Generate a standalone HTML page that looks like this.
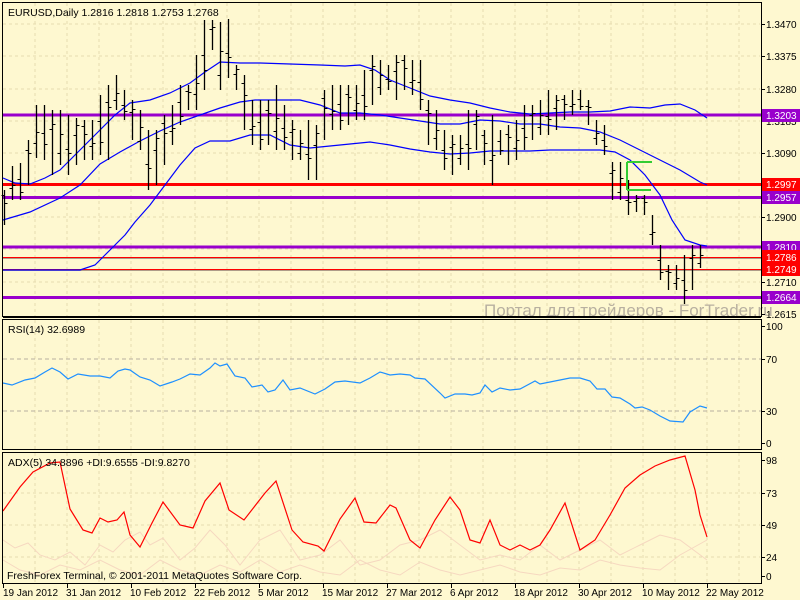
<!DOCTYPE html>
<html><head><meta charset="utf-8"><style>
html,body{margin:0;padding:0;background:#fef8d0;}
body{width:800px;height:600px;overflow:hidden;position:relative;font-family:"Liberation Sans",sans-serif;}
svg{position:absolute;left:0;top:0;}
</style></head><body>
<svg width="800" height="600" viewBox="0 0 800 600" xmlns="http://www.w3.org/2000/svg" font-family="Liberation Sans, sans-serif">
<rect width="800" height="600" fill="#fef8d0"/>
<g id="grid" stroke="#e6dcb0" stroke-dasharray="3,3" stroke-width="1"></g>
<text x="484" y="316" font-size="17" fill="#b8b0a0">Портал для трейдеров - ForTrader.ru</text>
<rect x="3" y="317" width="758" height="3" fill="#fef8d0"/>
<line x1="3" y1="115" x2="761" y2="115" stroke="#9900cc" stroke-width="3"/>
<line x1="3" y1="184.5" x2="761" y2="184.5" stroke="#ff0000" stroke-width="3"/>
<line x1="3" y1="197.5" x2="761" y2="197.5" stroke="#9900cc" stroke-width="3"/>
<line x1="3" y1="247" x2="761" y2="247" stroke="#9900cc" stroke-width="3"/>
<line x1="3" y1="257.5" x2="761" y2="257.5" stroke="#ff0000" stroke-width="1"/>
<line x1="3" y1="269.5" x2="761" y2="269.5" stroke="#ff0000" stroke-width="1"/>
<line x1="3" y1="297.5" x2="761" y2="297.5" stroke="#9900cc" stroke-width="3"/>
<line x1="3" y1="258.5" x2="761" y2="258.5" stroke="#604040" stroke-width="0.6"/>
<line x1="3" y1="270.5" x2="761" y2="270.5" stroke="#604040" stroke-width="0.6"/>
<g fill="none" stroke="#0000ff" stroke-width="1.2">
<polyline points="3,178 15,183 30,184 45,178 60,170 80,150 100,130 115,115 130,103 150,100 170,93 190,83 205,72 220,62 240,63 260,63 290,64 320,65 345,66 360,65 375,70 390,80 410,88 430,96 450,100 470,103 490,108 510,112 530,114 550,113 570,112 590,112 610,111 630,107 650,108 665,105 680,104 695,110 707,118"/>
<polyline points="3,220 30,212 60,198 80,185 100,164 120,152 140,141 160,131 180,122 200,115 220,108 240,102 255,100 280,100 300,100 320,105 340,113 360,113 380,115 400,118 420,121 440,124 460,124 480,120 500,121 520,124 540,124 560,127 580,128 590,130 600,132 620,140 640,150 660,160 680,170 700,182 707,185"/>
<polyline points="3,270 30,270 60,270 80,270 95,265 105,255 115,245 125,235 135,222 150,205 165,185 180,165 195,148 210,141 230,141 250,135 270,135 290,145 310,148 330,146 350,144 370,142 390,145 410,149 430,152 450,154 470,153 490,151 510,151 530,151 550,150 570,150 590,150 600,150 615,152 630,160 645,175 660,195 672,220 685,240 700,245 707,246"/>
</g>
<g id="bars" stroke="#000" stroke-width="1.3"></g>
<g stroke="#33cc33" stroke-width="2"><line x1="627" y1="162" x2="652" y2="162"/><line x1="627" y1="190" x2="651" y2="190"/><line x1="627" y1="162" x2="627" y2="190"/></g>
<line x1="3" y1="359" x2="761" y2="359" stroke="#b8b0a0" stroke-dasharray="4,3"/>
<line x1="3" y1="411" x2="761" y2="411" stroke="#b8b0a0" stroke-dasharray="4,3"/>
<polyline fill="none" stroke="#1e90ff" stroke-width="1.2" points="3,383 12,385 25,380 35,378 45,372 52,368 60,372 68,379 78,374 90,376 100,376 110,378 118,371 125,369 130,370 140,377 150,380 160,386 172,382 180,379 190,374 200,375 210,368 215,363 220,366 227,364 235,376 245,378 252,387 262,385 268,392 275,390 283,380 290,390 300,388 315,394 325,389 335,382 345,381 360,383 370,378 380,372 390,375 400,374 410,375 415,378 425,379 440,393 445,398 455,394 465,394 472,395 480,393 485,385 492,392 500,388 510,390 520,389 535,381 540,384 550,382 560,380 570,378 580,378 590,381 597,389 605,389 612,397 620,398 630,404 635,408 642,407 650,410 660,416 670,421 683,422 690,412 700,406 707,408"/>
<polyline fill="none" stroke="#f6d8c0" stroke-width="1" points="3,540 15,548 28,543 40,555 55,560 70,552 85,565 100,545 113,552 125,540 140,532 150,545 163,538 180,560 195,548 210,530 225,545 240,565 260,540 280,530 300,560 320,555 340,540 360,565 380,560 400,545 420,540 440,530 460,545 480,560 500,555 520,560 540,545 560,560 580,550 600,540 620,555 640,545 660,535 680,540 707,560"/>
<polyline fill="none" stroke="#f6d8c0" stroke-width="1" points="3,560 20,570 40,575 60,565 80,570 100,560 120,570 140,575 160,560 180,570 200,575 220,565 240,572 260,560 280,572 300,565 320,572 340,575 360,560 380,570 400,575 420,562 440,570 460,575 480,570 500,565 520,572 540,575 560,568 580,570 600,560 620,565 640,568 660,570 680,555 707,540"/>
<polyline fill="none" stroke="#ff0000" stroke-width="1.2" points="3,511 20,487 33,472 50,463 60,462 70,509 83,530 92,533 100,518 108,522 117,520 124,512 130,535 140,547 152,523 163,502 180,525 193,528 205,501 220,483 229,510 244,520 265,493 276,481 292,530 303,542 318,546 324,551 340,519 355,498 364,522 376,523 390,505 396,508 410,540 420,548 435,520 450,497 460,510 470,540 480,543 490,520 500,545 510,550 520,545 530,550 540,545 550,530 565,503 580,550 595,540 610,515 625,488 640,475 655,466 670,460 685,456 695,490 700,515 707,537"/>
<g fill="none" stroke="#000" stroke-width="1">
<rect x="2.5" y="2.5" width="759" height="314"/>
<rect x="2.5" y="319.5" width="759" height="130"/>
<rect x="2.5" y="452.5" width="759" height="131"/>
</g>
<line x1="3" y1="317.5" x2="761" y2="317.5" stroke="#000"/>
<g id="ticks" stroke="#000"></g>
<g font-size="10.5" fill="#000">
<text x="8" y="16">EURUSD,Daily  1.2816 1.2818 1.2753 1.2768</text>
<text x="8" y="333">RSI(14) 32.6989</text>
<text x="8" y="466">ADX(5) 34.8896 +DI:9.6555 -DI:9.8270</text>
<text x="7" y="579">FreshForex Terminal, © 2001-2011 MetaQuotes Software Corp.</text>
</g>
<g font-size="10" fill="#000">
<text x="766" y="28">1.3470</text><text x="766" y="60">1.3375</text><text x="766" y="93">1.3280</text><text x="766" y="125">1.3185</text><text x="766" y="157">1.3090</text><text x="766" y="221">1.2900</text><text x="766" y="286">1.2710</text><text x="766" y="318">1.2615</text>
<text x="766" y="330">100</text><text x="766" y="363">70</text><text x="766" y="415">30</text><text x="766" y="447">0</text>
<text x="766" y="464">98</text><text x="766" y="497">73</text><text x="766" y="529">49</text><text x="766" y="561">24</text><text x="766" y="580">0</text>
</g>
<g font-size="10">
<rect x="762" y="109" width="38" height="13" fill="#9900cc"/><text x="766" y="119" fill="#fff">1.3203</text>
<rect x="762" y="178" width="38" height="13" fill="#ff0000"/><text x="766" y="188" fill="#fff">1.2997</text>
<rect x="762" y="191" width="38" height="13" fill="#9900cc"/><text x="766" y="201" fill="#fff">1.2957</text>
<rect x="762" y="241" width="38" height="13" fill="#9900cc"/><text x="766" y="251" fill="#fff">1.2810</text>
<rect x="762" y="250" width="38" height="13" fill="#ff0000"/><text x="766" y="261" fill="#fff">1.2786</text>
<rect x="762" y="263" width="38" height="13" fill="#ff0000"/><text x="766" y="273" fill="#fff">1.2749</text>
<rect x="762" y="291" width="38" height="13" fill="#9900cc"/><text x="766" y="301" fill="#fff">1.2664</text>
</g>
<g font-size="10" fill="#000">
<text x="3" y="596">19 Jan 2012</text><text x="66" y="596">31 Jan 2012</text><text x="130" y="596">10 Feb 2012</text><text x="194" y="596">22 Feb 2012</text><text x="258" y="596">5 Mar 2012</text><text x="322" y="596">15 Mar 2012</text><text x="386" y="596">27 Mar 2012</text><text x="450" y="596">6 Apr 2012</text><text x="514" y="596">18 Apr 2012</text><text x="578" y="596">30 Apr 2012</text><text x="642" y="596">10 May 2012</text><text x="706" y="596">22 May 2012</text>
</g>
</svg>
<script>
var NS="http://www.w3.org/2000/svg";
function L(g,x1,y1,x2,y2,extra){var l=document.createElementNS(NS,"line");l.setAttribute("x1",x1);l.setAttribute("y1",y1);l.setAttribute("x2",x2);l.setAttribute("y2",y2);if(extra)for(var k in extra)l.setAttribute(k,extra[k]);g.appendChild(l);}
var grid=document.getElementById("grid");
for(var x=35;x<760;x+=32){L(grid,x,3,x,316);L(grid,x,320,x,449);L(grid,x,453,x,583);}
[24,56,89,121,153,185,217,249,282].forEach(function(y){L(grid,3,y,760,y);});
[493,525,557].forEach(function(y){L(grid,3,y,760,y);});
var hl=[[190,225],[166,200],[163,200],[140,185],[105,158],[105,160],[110,175],[110,165],[115,175],[118,165],[120,160],[120,160],[95,155],[85,160],[75,110],[90,120],[100,140],[110,150],[130,190],[130,185],[115,165],[105,145],[85,125],[85,110],[55,110],[20,90],[20,50],[22,90],[19,78],[65,90],[75,130],[100,145],[100,150],[100,145],[85,150],[105,150],[120,160],[130,160],[120,180],[125,180],[90,140],[85,130],[85,130],[85,125],[85,120],[70,120],[55,105],[60,95],[65,90],[55,100],[55,90],[60,95],[60,110],[100,145],[110,150],[130,170],[135,175],[135,165],[110,170],[110,150],[130,165],[115,185],[130,155],[125,165],[120,160],[105,150],[105,140],[100,135],[90,135],[95,130],[95,120],[90,115],[90,110],[100,125],[120,145],[125,155],[162,200],[162,200],[180,215],[195,212],[195,215],[215,245],[245,280],[265,290],[265,290],[255,304],[245,290],[245,268]];
var bars=document.getElementById("bars");
hl.forEach(function(b,i){var x=4+8*i+0.5;var h=b[0],l=b[1],r=l-h;
var o=h+r*(((i*37)%10)/10*0.7+0.15),c=h+r*(((i*53+3)%10)/10*0.7+0.15);
L(bars,x,h,x,l);L(bars,x-3,Math.round(o)+0.5,x,Math.round(o)+0.5,{"stroke-width":1});L(bars,x,Math.round(c)+0.5,x+3,Math.round(c)+0.5,{"stroke-width":1});});
var t=document.getElementById("ticks");
[24,56,89,121,153,217,282,314,326,359,411,443,460,493,525,557,576].forEach(function(y){L(t,761,y+0.5,765,y+0.5);});
for(var x=3;x<760;x+=64){L(t,x+0.5,584,x+0.5,588);}
</script>
</body></html>
